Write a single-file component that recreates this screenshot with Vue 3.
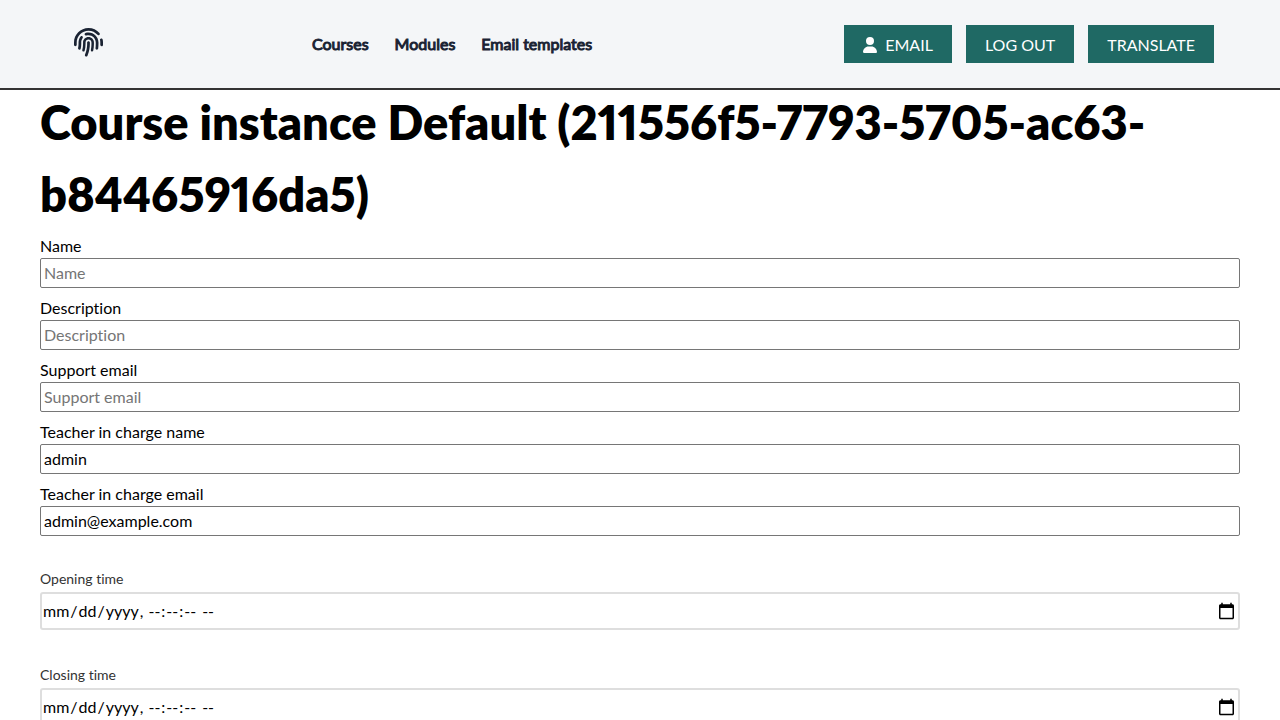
<script setup>
import { reactive } from 'vue'

const links = ['Courses', 'Modules', 'Email templates']

const textFields = reactive([
  { id: 'name', label: 'Name', placeholder: 'Name', value: '' },
  { id: 'description', label: 'Description', placeholder: 'Description', value: '' },
  { id: 'support-email', label: 'Support email', placeholder: 'Support email', value: '' },
  { id: 'teacher-name', label: 'Teacher in charge name', placeholder: 'Teacher in charge name', value: 'admin' },
  { id: 'teacher-email', label: 'Teacher in charge email', placeholder: 'Teacher in charge email', value: 'admin@example.com' },
])

const timeFields = reactive([
  { id: 'opening-time', label: 'Opening time', value: '' },
  { id: 'closing-time', label: 'Closing time', value: '' },
])
</script>

<template>
  <div class="page">
    <header class="header">
      <a class="logo" href="#" aria-label="Home">
        <svg viewBox="0 0 512 512" fill="currentColor" aria-hidden="true">
          <path d="M48 256C48 141.1 141.1 48 256 48c63.1 0 119.6 28.1 157.8 72.5c8.6 10.1 23.8 11.2 33.8 2.6s11.2-23.8 2.6-33.8C403.3 34.6 333.7 0 256 0C114.6 0 0 114.6 0 256v40c0 13.3 10.7 24 24 24s24-10.7 24-24V256zm458.5-52.9c-2.7-13-15.5-21.3-28.4-18.5s-21.3 15.5-18.5 28.4c2.9 13.9 4.5 28.3 4.5 43.1v40c0 13.3 10.7 24 24 24s24-10.7 24-24V256c0-18.1-1.9-35.8-5.5-52.9zM256 80c-19 0-37.4 3-54.5 8.6c-15.2 5-18.7 23.7-8.3 35.9c7.1 8.3 18.8 10.8 29.4 7.9c10.6-2.9 21.8-4.4 33.4-4.4c70.7 0 128 57.3 128 128v24.9c0 25.2-1.5 50.3-4.4 75.3c-1.7 14.6 9.4 27.8 24.2 27.8c11.8 0 21.9-8.6 23.3-20.3c3.3-27.4 5-55 5-82.7V256c0-97.2-78.8-176-176-176zM150.7 148.7c-9.1-10.6-25.3-11.4-33.9-.4C93.7 178 80 215.4 80 256v24.9c0 24.2-2.6 48.4-7.8 71.9C68.8 368.4 80.1 384 96.1 384c10.5 0 19.9-7 22.2-17.3c6.4-28.1 9.7-56.8 9.7-85.8V256c0-27.2 8.5-52.4 22.9-73.1c7.2-10.4 8-24.6-.2-34.2zM256 160c-53 0-96 43-96 96v24.9c0 35.9-4.6 71.5-13.8 106.1c-3.8 14.3 6.7 29 21.5 29c9.5 0 17.9-6.2 20.4-15.4c10.5-39 15.9-79.2 15.9-119.7V256c0-28.7 23.3-52 52-52s52 23.3 52 52v24.9c0 36.3-3.5 72.4-10.4 107.9c-2.7 13.9 7.7 27.2 21.8 27.2c10.2 0 19-7 21-17c7.7-38.8 11.6-78.3 11.6-118.1V256c0-53-43-96-96-96zm24 96c0-13.3-10.7-24-24-24s-24 10.7-24 24v24.9c0 59.9-11 119.3-32.5 175.2l-5.9 15.3c-4.8 12.4 1.4 26.3 13.8 31s26.3-1.4 31-13.8l5.9-15.3C267.9 411.9 280 346.7 280 280.9V256z" />
        </svg>
      </a>
      <nav class="nav">
        <a v-for="link in links" :key="link" href="#">{{ link }}</a>
      </nav>
      <div class="actions">
        <button type="button">
          <svg class="user" viewBox="0 0 448 512" fill="currentColor" aria-hidden="true">
            <path d="M224 256A128 128 0 1 0 224 0a128 128 0 1 0 0 256zm-45.7 48C79.8 304 0 383.8 0 482.3C0 498.7 13.3 512 29.7 512H418.3c16.4 0 29.7-13.3 29.7-29.7C448 383.8 368.2 304 269.7 304H178.3z" />
          </svg>
          <span>Email</span>
        </button>
        <button type="button">Log out</button>
        <button type="button">Translate</button>
      </div>
    </header>

    <main class="content">
      <h1>Course instance Default (211556f5-7793-5705-ac63-b84465916da5)</h1>
      <form @submit.prevent>
        <div v-for="field in textFields" :key="field.id" class="field">
          <label :for="field.id">{{ field.label }}</label>
          <input :id="field.id" v-model="field.value" type="text" :placeholder="field.placeholder" />
        </div>
        <div v-for="field in timeFields" :key="field.id" class="time-field">
          <label :for="field.id">{{ field.label }}</label>
          <input :id="field.id" v-model="field.value" type="datetime-local" step="1" />
        </div>
      </form>
    </main>
  </div>
</template>

<style>
body {
  background: #fff;
}
html {
  scrollbar-width: none;
}
</style>

<style scoped>
.page {
  font-family: Lato, "Open Sans", sans-serif;
  font-size: 16px;
  line-height: 24px;
  font-variant-ligatures: none;
  color: #000;
}
.header {
  display: flex;
  align-items: center;
  box-sizing: border-box;
  min-height: 90px;
  padding: 0 66px 0 74px;
  background: #f4f6f8;
  border-bottom: 2px solid #333;
}
.logo {
  display: flex;
  padding-bottom: 4px;
  color: #1a2333;
}
.logo svg {
  width: 29px;
  height: 29px;
}
.nav {
  display: flex;
  gap: 26px;
  margin-left: 209px;
}
.nav a {
  color: #1a2333;
  -webkit-text-stroke: 1px #1a2333;
  text-decoration: none;
}
.actions {
  display: flex;
  gap: 14px;
  margin-left: auto;
}
.actions button {
  display: flex;
  align-items: center;
  gap: 8px;
  height: 38px;
  padding: 2px 19px 0;
  border: 0;
  background: #1f6964;
  color: #fff;
  font: inherit;
  text-transform: uppercase;
}
.user {
  width: 14px;
  height: 16px;
}
.content {
  padding: 0 40px;
}
h1 {
  margin: -4px 0 4px;
  font-size: 47px;
  line-height: 72px;
  font-weight: 800;
  font-variant-numeric: proportional-nums;
}
.field {
  margin-bottom: 8px;
}
.field label,
.time-field label {
  display: block;
}
.field input {
  display: block;
  box-sizing: border-box;
  width: 100%;
  height: 30px;
  padding: 0 3px 2px;
  border: 1px solid #767676;
  border-radius: 2px;
  background: #fff;
  color: #000;
  font: inherit;
}
.field input::placeholder {
  color: #757575;
}
.time-field {
  margin-top: 32px;
  padding-bottom: 2px;
}
.time-field label {
  margin-bottom: 2px;
  color: #333;
  font-size: 14px;
  line-height: 22px;
}
.time-field input {
  display: block;
  box-sizing: border-box;
  width: 100%;
  height: 38px;
  padding: 0;
  border: 2px solid #dedede;
  border-radius: 3px;
  background: #fff;
  color: #000;
  font: inherit;
}
.time-field input::-webkit-calendar-picker-indicator {
  width: 19px;
  height: 19px;
}
</style>
